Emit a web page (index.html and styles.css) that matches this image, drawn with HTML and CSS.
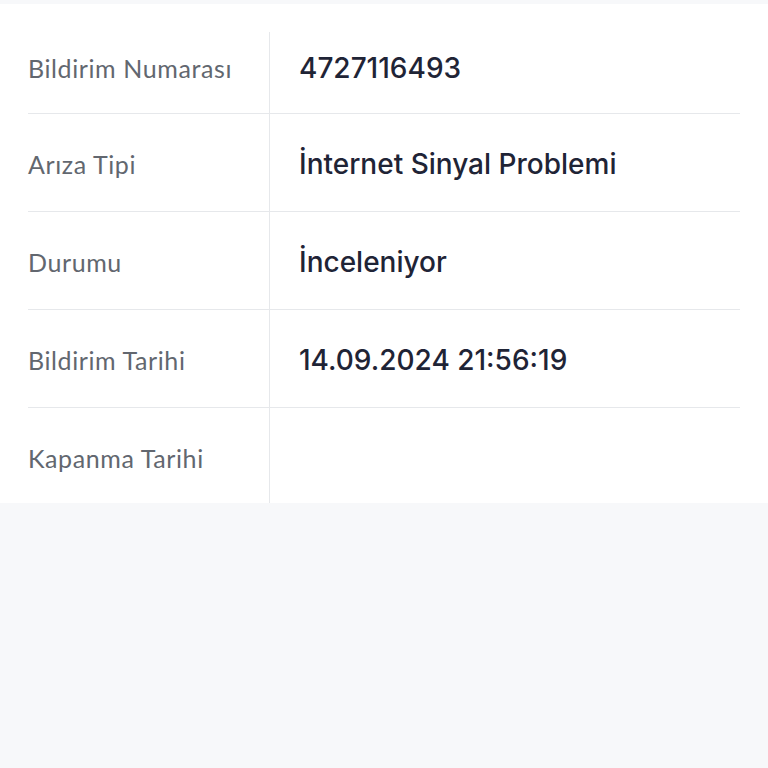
FILE: index.html
```html
<!DOCTYPE html>
<html lang="tr">

<head>
    <meta charset="utf-8">
    <link rel="stylesheet" href="styles.css">
</head>

<body>

    <div class="detail-card">
        <div class="detail-row first">
            <div class="detail-label">Bildirim Numarası</div>
            <div class="detail-value">4727116493</div>
        </div>
        <div class="detail-row">
            <div class="detail-label">Arıza Tipi</div>
            <div class="detail-value">İnternet Sinyal Problemi</div>
        </div>
        <div class="detail-row">
            <div class="detail-label">Durumu</div>
            <div class="detail-value">İnceleniyor</div>
        </div>
        <div class="detail-row">
            <div class="detail-label">Bildirim Tarihi</div>
            <div class="detail-value">14.09.2024 21:56:19</div>
        </div>
        <div class="detail-row last">
            <div class="detail-label">Kapanma Tarihi</div>
            <div class="detail-value"></div>
        </div>
    </div>

</body>

</html>
```

FILE: styles.css
```css
body {
    margin: 0;
    background: #f7f8fa;
}

.detail-card {
    margin-top: 4px;
    padding: 28px 28px 0;
    background: #fff;
}

.detail-row {
    display: flex;
    border-bottom: 1px solid #e6e8eb;
}

.detail-row.last {
    border-bottom: none;
}

.detail-label,
.detail-value {
    padding: 34px 0 31px;
    line-height: 32px;
    min-height: 32px;
}

.detail-label {
    width: 241px;
    flex-shrink: 0;
    border-right: 1px solid #e6e8eb;
    font-family: "Lato", sans-serif;
    font-size: 25px;
    letter-spacing: 0.6px;
    color: #62676f;
}

.detail-value {
    padding-left: 29px;
    font-family: "Inter", sans-serif;
    font-size: 28px;
    font-weight: 500;
    color: #1f2436;
}

.detail-row.first .detail-label,
.detail-row.first .detail-value {
    padding-top: 20px;
    padding-bottom: 29px;
}

.detail-row.last .detail-label,
.detail-row.last .detail-value {
    padding-bottom: 29px;
}
```
